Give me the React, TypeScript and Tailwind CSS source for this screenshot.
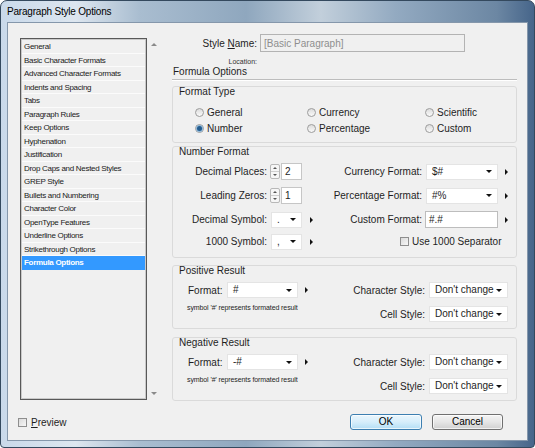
import React from "react";

const pages = [
  "General",
  "Basic Character Formats",
  "Advanced Character Formats",
  "Indents and Spacing",
  "Tabs",
  "Paragraph Rules",
  "Keep Options",
  "Hyphenation",
  "Justification",
  "Drop Caps and Nested Styles",
  "GREP Style",
  "Bullets and Numbering",
  "Character Color",
  "OpenType Features",
  "Underline Options",
  "Strikethrough Options",
  "Formula Options",
];

// little black flyout arrow next to the controls
const Flyout = () => (
  <span className="block w-0 h-0 border-y-[3px] border-y-transparent border-l-[3px] border-l-[#111]" />
);

const Caret = () => (
  <span className="block w-0 h-0 border-x-[3px] border-x-transparent border-t-[3px] border-t-[#111]" />
);

const Select = ({ value, className }: { value: string; className: string }) => (
  <div
    className={`h-[16px] flex items-center justify-between bg-white border border-[#e4e4e4] pl-[5px] pr-[5px] ${className}`}
  >
    <span className="leading-[14px]">{value}</span>
    <Caret />
  </div>
);

const Spinner = ({ value }: { value: string }) => (
  <div className="flex items-center h-[17px]">
    <div className="w-[10px] h-[15px] flex flex-col border border-[#b8b8b8] bg-[#f6f6f6] rounded-[2px]">
      <div className="flex-1 flex items-center justify-center border-b border-[#cfcfcf]">
        <span className="block w-0 h-0 border-x-[2px] border-x-transparent border-b-[2px] border-b-[#555]" />
      </div>
      <div className="flex-1 flex items-center justify-center">
        <span className="block w-0 h-0 border-x-[2px] border-x-transparent border-t-[2px] border-t-[#555]" />
      </div>
    </div>
    <div className="ml-[1px] w-[21px] h-[17px] bg-white border border-[#c6c6c6] pl-[3px] flex items-center">
      {value}
    </div>
  </div>
);

const Radio = ({ label, checked }: { label: string; checked?: boolean }) => (
  <div className="flex items-center h-[14px] gap-[3px]">
    <span className="w-[9px] h-[9px] rounded-full border border-[#9c9c9c] bg-gradient-to-b from-[#dcdcdc] to-[#fafafa] flex items-center justify-center">
      {checked && <span className="w-[5px] h-[5px] rounded-full bg-[#245d8f] shadow-[0_0_0_1px_#8fb7d8]" />}
    </span>
    <span>{label}</span>
  </div>
);

const Checkbox = () => (
  <span className="block w-[9px] h-[9px] border border-[#8e8e8e] bg-gradient-to-br from-[#dadada] to-[#f7f7f7]" />
);

const Group = ({
  title,
  className,
  children,
}: {
  title: string;
  className: string;
  children: React.ReactNode;
}) => (
  <div className={`rounded-[3px] border border-[#dadada] ${className}`}>
    <div className="pl-[6px] h-[10px] leading-[10px]">{title}</div>
    {children}
  </div>
);

const ResultBox = ({ title, format, className }: { title: string; format: string; className: string }) => (
  <Group title={title} className={`h-[64px] ${className}`}>
    <div className="mt-[6px] flex">
      <div className="w-[157px]">
        <div className="flex items-center h-[16px]">
          <div className="ml-[15px] w-[33px]">Format:</div>
          <Select value={format} className="ml-[6px] w-[71px]" />
          <div className="ml-[7px]">
            <Flyout />
          </div>
        </div>
        <div className="mt-[6px] pl-[14px] text-[7px] leading-[8px] tracking-[-0.1px]">
          symbol '#' represents formated result
        </div>
      </div>
      <div className="flex flex-col gap-[8px]">
        <div className="flex items-center h-[16px]">
          <div className="w-[95px] text-right">Character Style:</div>
          <Select value="Don't change" className="ml-[4px] w-[79px]" />
        </div>
        <div className="flex items-center h-[16px]">
          <div className="w-[95px] text-right">Cell Style:</div>
          <Select value="Don't change" className="ml-[4px] w-[79px]" />
        </div>
      </div>
    </div>
  </Group>
);

export default function App() {
  return (
    <div className="w-[535px] h-[448px] flex flex-col overflow-hidden border border-[#34495e] rounded-t-[7px] rounded-b-[4px] bg-[linear-gradient(to_right,#c9d9ea_0%,#dde6ef_14%,#a9bdd0_26%,#8fa7be_46%,#c2cfdb_60%,#93aac1_74%,#6c87a3_93%,#46658a_100%)] font-['Liberation_Sans',Arial,sans-serif] text-[10px] text-[#1e1e1e]">
      <div className="h-[21px] pl-[6px] flex items-center text-[10px] tracking-[-0.2px] text-black">
        Paragraph Style Options
      </div>

      <div className="mx-[6px] mb-[6px] flex-1 flex flex-col pt-[11px] border border-[#8597ab] bg-[#f0f0f0]">
        <div className="flex h-[367px]">
          {/* page list */}
          <div className="pl-[12px] flex">
            <div className="mt-[4px] w-[127px] h-[362px] border border-[#585858] shadow-[inset_0_0_0_1px_#c9c9c9] bg-[#f0f0f0] pt-[1px] px-[1px]">
              {pages.map((p) => (
                <div
                  key={p}
                  className={
                    p === "Formula Options"
                      ? "h-[13.5px] pl-[2px] leading-[13px] text-[8px] tracking-[-0.3px] font-bold text-white bg-[#3399ff]"
                      : "h-[13.5px] pl-[2px] leading-[13px] text-[8px] tracking-[-0.3px] text-[#1a1a1a] border-b border-[#fbfbfb]"
                  }
                >
                  {p}
                </div>
              ))}
            </div>
            <div className="mt-[4px] w-[13px] h-[362px] py-[5px] flex flex-col items-center justify-between">
              <span className="block w-0 h-0 border-x-[3px] border-x-transparent border-b-[3px] border-b-[#8a8a8a]" />
              <span className="block w-0 h-0 border-x-[3px] border-x-transparent border-t-[3px] border-t-[#8a8a8a]" />
            </div>
          </div>

          {/* settings */}
          <div className="ml-[12px] w-[345px] flex flex-col">
            <div className="flex items-center h-[18px]">
              <div className="w-[85px] text-right">
                Style <span className="underline">N</span>ame:
              </div>
              <div className="ml-[3px] w-[205px] h-[18px] pl-[3px] flex items-center border border-[#b3b3b3] bg-[#f0f0f0] text-[#8e8e8e]">
                [Basic Paragraph]
              </div>
            </div>
            <div className="mt-[6px] w-[85px] h-[8px] text-right text-[7px] leading-[8px] text-[#333]">Location:</div>
            <div className="h-[14px] pl-[1px] leading-[12px] border-b border-[#bdbdbd] shadow-[0_1px_0_#ffffff]">
              Formula Options
            </div>

            <Group title="Format Type" className="mt-[6px] h-[57px]">
              <div className="mt-[8px] pl-[22px] grid grid-cols-[112px_118px_1fr] gap-y-[2px]">
                <Radio label="General" />
                <Radio label="Currency" />
                <Radio label="Scientific" />
                <Radio label="Number" checked />
                <Radio label="Percentage" />
                <Radio label="Custom" />
              </div>
            </Group>

            <Group title="Number Format" className="mt-[3px] h-[112px]">
              <div className="mt-[6px] flex items-center h-[17px]">
                <div className="w-[94px] text-right">Decimal Places:</div>
                <div className="ml-[3px] w-[32px]">
                  <Spinner value="2" />
                </div>
                <div className="w-[12px]" />
                <div className="w-[108px] text-right">Currency Format:</div>
                <Select value="$#" className="ml-[4px] w-[72px]" />
                <div className="ml-[7px]">
                  <Flyout />
                </div>
              </div>
              <div className="mt-[7px] flex items-center h-[17px]">
                <div className="w-[94px] text-right">Leading Zeros:</div>
                <div className="ml-[3px] w-[32px]">
                  <Spinner value="1" />
                </div>
                <div className="w-[12px]" />
                <div className="w-[108px] text-right">Percentage Format:</div>
                <Select value="#%" className="ml-[4px] w-[72px]" />
                <div className="ml-[7px]">
                  <Flyout />
                </div>
              </div>
              <div className="mt-[7px] flex items-center h-[17px]">
                <div className="w-[94px] text-right">Decimal Symbol:</div>
                <Select value="." className="ml-[4px] w-[31px]" />
                <div className="w-[12px] pl-[8px]">
                  <Flyout />
                </div>
                <div className="w-[108px] text-right">Custom Format:</div>
                <div className="ml-[3px] w-[73px] h-[17px] pl-[3px] flex items-center bg-white border border-[#bdbdbd]">
                  #.#
                </div>
                <div className="ml-[7px]">
                  <Flyout />
                </div>
              </div>
              <div className="mt-[5px] flex items-center h-[17px]">
                <div className="w-[94px] text-right">1000 Symbol:</div>
                <Select value="," className="ml-[4px] w-[31px]" />
                <div className="w-[12px] pl-[8px]">
                  <Flyout />
                </div>
                <div className="ml-[86px] flex items-center gap-[3px]">
                  <Checkbox />
                  <span>Use 1000 Separator</span>
                </div>
              </div>
            </Group>

            <ResultBox title="Positive Result" format="#" className="mt-[7px]" />
            <ResultBox title="Negative Result" format="-#" className="mt-[8px]" />
          </div>
        </div>

        <div className="mt-[13px] h-[16px] flex items-center">
          <div className="pl-[10px] flex items-center gap-[4px]">
            <Checkbox />
            <span>
              <span className="underline">P</span>review
            </span>
          </div>
          <button className="ml-auto w-[72px] h-[16px] rounded-[3px] border border-[#3c7fb1] bg-gradient-to-b from-[#eaf6fd] via-[#d6eefb] to-[#b3def5] shadow-[inset_0_0_0_1px_rgba(255,255,255,0.7)] text-[10px] leading-[14px] text-black">
            OK
          </button>
          <button className="ml-[10px] mr-[24px] w-[71px] h-[16px] rounded-[3px] border border-[#707070] bg-gradient-to-b from-[#f4f4f4] via-[#e6e6e6] to-[#d0d0d0] shadow-[inset_0_0_0_1px_rgba(255,255,255,0.7)] text-[10px] leading-[14px] text-black">
            Cancel
          </button>
        </div>
      </div>
    </div>
  );
}
